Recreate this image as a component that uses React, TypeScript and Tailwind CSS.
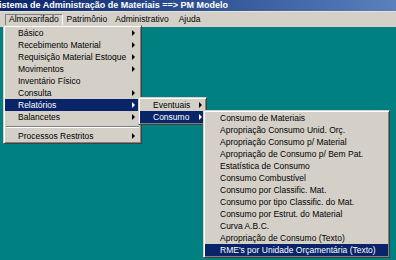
import React from "react";

type Item = { label: string; arrow?: boolean; active?: boolean; sep?: boolean };

const mainItems: Item[] = [
  { label: "Básico", arrow: true },
  { label: "Recebimento Material", arrow: true },
  { label: "Requisição Material Estoque", arrow: true },
  { label: "Movimentos", arrow: true },
  { label: "Inventário Físico" },
  { label: "Consulta", arrow: true },
  { label: "Relatórios", arrow: true, active: true },
  { label: "Balancetes", arrow: true },
  { label: "", sep: true },
  { label: "Processos Restritos", arrow: true },
];

const relItems: Item[] = [
  { label: "Eventuais", arrow: true },
  { label: "Consumo", arrow: true, active: true },
];

const consumoItems: Item[] = [
  { label: "Consumo de Materiais" },
  { label: "Apropriação Consumo Unid. Orç." },
  { label: "Apropriação Consumo p/ Material" },
  { label: "Apropriação de Consumo p/ Bem Pat." },
  { label: "Estatística de Consumo" },
  { label: "Consumo Combustível" },
  { label: "Consumo por Classific. Mat." },
  { label: "Consumo por tipo Classific. do Mat." },
  { label: "Consumo por Estrut. do Material" },
  { label: "Curva A.B.C." },
  { label: "Apropriação de Consumo (Texto)" },
  { label: "RME's por Unidade Orçamentária (Texto)", active: true },
];

const Arrow = ({ white }: { white?: boolean }) => (
  <svg width="3" height="6" viewBox="0 0 3 6" className="shrink-0">
    <polygon points="0,0 3,3 0,6" fill={white ? "#ffffff" : "#000000"} />
  </svg>
);

// win2000 style raised box
const box =
  "absolute bg-[#d4d0c8] border border-t-[#d4d0c8] border-l-[#d4d0c8] border-r-[#404040] border-b-[#404040] shadow-[inset_1px_1px_0_#ffffff,inset_-1px_-1px_0_#808080] p-[1px]";

const Menu = ({ items, pl, pr }: { items: Item[]; pl: string; pr: string }) => (
  <>
    {items.map((it, i) =>
      it.sep ? (
        <div key={i} className="h-[7px] flex flex-col justify-center px-[1px]">
          <div className="h-[1px] bg-[#808080]" />
          <div className="h-[1px] bg-white" />
        </div>
      ) : (
        <div
          key={i}
          className={`h-[12px] flex items-center justify-between ${pl} ${pr} ${
            it.active ? "bg-[#0a246a] text-white" : "text-black"
          }`}
        >
          <span className="whitespace-nowrap leading-none">{it.label}</span>
          {it.arrow && <Arrow white={it.active} />}
        </div>
      )
    )}
  </>
);

export default function App() {
  return (
    <div
      className="relative w-[396px] h-[260px] overflow-hidden bg-[#008080] text-[8.5px]"
      style={{ fontFamily: '"Liberation Sans", Arial, sans-serif' }}
    >
      {/* title bar */}
      <div className="h-[11px] bg-gradient-to-r from-[#0a246a] to-[#5a80bd] flex items-center">
        <span className="text-white font-bold text-[9px] leading-none whitespace-nowrap -ml-[1px]">
          istema de Administração de Materiais ==&gt; PM Modelo
        </span>
      </div>

      {/* menu bar */}
      <div className="h-[16px] bg-[#d4d0c8] flex items-center pl-[5px] border-t border-[#e6e3dd]">
        <div className="h-[12px] px-[3px] flex items-center border border-t-[#808080] border-l-[#808080] border-r-white border-b-white">
          Almoxarifado
        </div>
        <div className="h-[12px] px-[4px] flex items-center">Patrimônio</div>
        <div className="h-[12px] px-[4px] flex items-center">Administrativo</div>
        <div className="h-[12px] px-[6px] flex items-center">Ajuda</div>
      </div>

      {/* Almoxarifado dropdown */}
      <div className={`${box} left-[3px] top-[25px] w-[139px]`}>
        <Menu items={mainItems} pl="pl-[13px]" pr="pr-[5px]" />
      </div>

      {/* Relatórios submenu */}
      <div className={`${box} left-[138px] top-[97px] w-[69px]`}>
        <Menu items={relItems} pl="pl-[13px]" pr="pr-[3px]" />
      </div>

      {/* Consumo submenu */}
      <div className={`${box} left-[203px] top-[110px] w-[187px]`}>
        <Menu items={consumoItems} pl="pl-[15px]" pr="pr-[3px]" />
      </div>
    </div>
  );
}
